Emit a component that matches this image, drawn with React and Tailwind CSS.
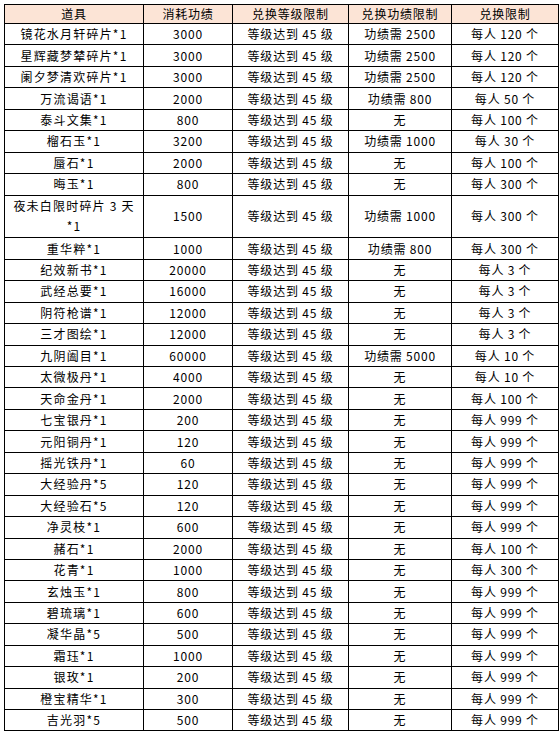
const rows = [
  ['镜花水月轩碎片*1', '3000', '功绩需 2500', '每人 120 个'],
  ['星辉藏梦辇碎片*1', '3000', '功绩需 2500', '每人 120 个'],
  ['阑夕梦清欢碎片*1', '3000', '功绩需 2500', '每人 120 个'],
  ['万流谒语*1', '2000', '功绩需 800', '每人 50 个'],
  ['泰斗文集*1', '800', '无', '每人 100 个'],
  ['榴石玉*1', '3200', '功绩需 1000', '每人 30 个'],
  ['蜃石*1', '2000', '无', '每人 100 个'],
  ['晦玉*1', '800', '无', '每人 300 个'],
  [['夜未白限时碎片 3 天', '*1'], '1500', '功绩需 1000', '每人 300 个'],
  ['重华粹*1', '1000', '功绩需 800', '每人 300 个'],
  ['纪效新书*1', '20000', '无', '每人 3 个'],
  ['武经总要*1', '16000', '无', '每人 3 个'],
  ['阴符枪谱*1', '12000', '无', '每人 3 个'],
  ['三才图绘*1', '12000', '无', '每人 3 个'],
  ['九阴阖目*1', '60000', '功绩需 5000', '每人 10 个'],
  ['太微极丹*1', '4000', '无', '每人 10 个'],
  ['天命金丹*1', '2000', '无', '每人 100 个'],
  ['七宝银丹*1', '200', '无', '每人 999 个'],
  ['元阳铜丹*1', '120', '无', '每人 999 个'],
  ['摇光铁丹*1', '60', '无', '每人 999 个'],
  ['大经验丹*5', '120', '无', '每人 999 个'],
  ['大经验石*5', '120', '无', '每人 999 个'],
  ['净灵枝*1', '600', '无', '每人 999 个'],
  ['赭石*1', '2000', '无', '每人 100 个'],
  ['花青*1', '1000', '无', '每人 300 个'],
  ['玄烛玉*1', '800', '无', '每人 999 个'],
  ['碧琉璃*1', '600', '无', '每人 999 个'],
  ['凝华晶*5', '500', '无', '每人 999 个'],
  ['霜珏*1', '1000', '无', '每人 999 个'],
  ['银玫*1', '200', '无', '每人 999 个'],
  ['橙宝精华*1', '300', '无', '每人 999 个'],
  ['吉光羽*5', '500', '无', '每人 999 个'],
]

const cell = 'border border-black p-0 text-center align-middle whitespace-nowrap tracking-[0.8px]'

export default function App() {
  return (
    <div className="bg-white w-[560px] h-[733px] pt-[4px] pl-[4px] text-[12px] text-black font-['Noto_Sans_CJK_SC',sans-serif]">
      <table className="border-collapse table-fixed w-[554px]">
        <colgroup>
          <col className="w-[139px]" />
          <col className="w-[89px]" />
          <col className="w-[116px]" />
          <col className="w-[103px]" />
          <col className="w-[107px]" />
        </colgroup>
        <thead>
          <tr className="h-[19px] bg-[#fce4d6] leading-[16px]">
            <th className={`${cell} font-normal`}>道具</th>
            <th className={`${cell} font-normal`}>消耗功绩</th>
            <th className={`${cell} font-normal`}>兑换等级限制</th>
            <th className={`${cell} font-normal`}>兑换功绩限制</th>
            <th className={`${cell} font-normal`}>兑换限制</th>
          </tr>
        </thead>
        <tbody>
          {rows.map((r, i) => {
            const double = Array.isArray(r[0])
            return (
              <tr key={i} className={double ? 'h-[42.9px] leading-[20.5px]' : 'h-[21.45px] leading-[16px]'}>
                <td className={`${cell} tracking-[1.2px]`}>
                  {double ? (
                    <>
                      {r[0][0]}
                      <br />
                      {r[0][1]}
                    </>
                  ) : (
                    r[0]
                  )}
                </td>
                <td className={cell}>{r[1]}</td>
                <td className={cell}>等级达到 45 级</td>
                <td className={cell}>{r[2]}</td>
                <td className={cell}>{r[3]}</td>
              </tr>
            )
          })}
        </tbody>
      </table>
    </div>
  )
}
